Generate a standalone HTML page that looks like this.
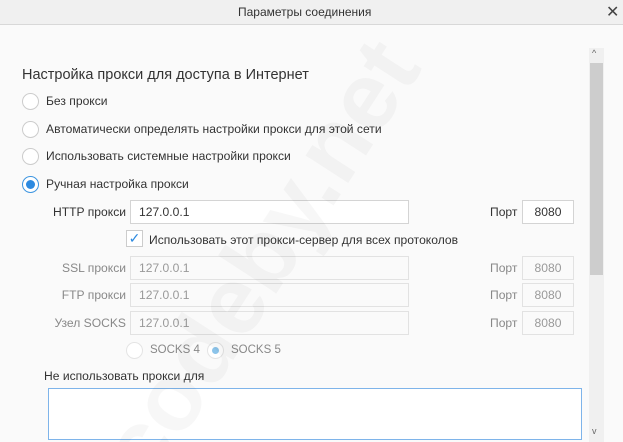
<!DOCTYPE html>
<html><head><meta charset="utf-8"><style>
*{box-sizing:border-box;margin:0;padding:0}
html,body{width:623px;height:442px;overflow:hidden}
body{background:#fafafa;font-family:"Liberation Sans",sans-serif;font-size:12.1px;color:#333}
#w{position:relative;width:623px;height:442px;overflow:hidden}
.a{position:absolute;white-space:nowrap}
.tb{position:absolute;left:0;top:0;width:623px;height:25px;background:#f0f0f0;border-bottom:1px solid #d8d8d8}
.r{position:absolute;width:17px;height:17px;border:1px solid #ccc;border-radius:50%;background:#fff}
.in{position:absolute;height:24px;border:1px solid #d4d4d4;background:#fff;padding:4px 8px;font-size:12.1px}
.dis{color:#999;background:#fafafa;border-color:#e2e2e2}
.lab{position:absolute;text-align:right;width:126px;left:0}
.g{color:#888}
</style></head><body><div id="w">
<div class="tb"></div>
<div class="a" style="left:238px;top:5px;font-size:12px;color:#333">Параметры соединения</div>
<div class="a" style="left:606px;top:2px;font-size:16px;color:#444">✕</div>
<div class="a" style="left:589px;top:48px;width:15px;height:394px;background:#f0f0f0"></div>
<div class="a" style="left:590px;top:63px;width:13px;height:212px;background:#cdcdcd"></div>
<div class="a" style="left:592px;top:48px;font-size:9px;color:#666">^</div>
<div class="a" style="left:592px;top:426px;font-size:9px;color:#666">v</div>
<div class="a" style="left:22px;top:67px;font-size:14.5px;color:#333">Настройка прокси для доступа в Интернет</div>
<div class="r" style="left:22px;top:93px"></div><div class="a" style="left:46px;top:94px">Без прокси</div>
<div class="r" style="left:22px;top:121px"></div><div class="a" style="left:46px;top:122px">Автоматически определять настройки прокси для этой сети</div>
<div class="r" style="left:22px;top:148px"></div><div class="a" style="left:46px;top:149px">Использовать системные настройки прокси</div>
<div class="r" style="left:22px;top:176px;border-color:#3d95e0"><div style="position:absolute;left:3px;top:3px;width:9px;height:9px;border-radius:50%;background:#2d8ae0"></div></div><div class="a" style="left:46px;top:177px">Ручная настройка прокси</div>
<div class="lab" style="top:205px">HTTP прокси</div>
<div class="in" style="left:130px;top:200px;width:279px">127.0.0.1</div>
<div class="a" style="left:490px;top:205px">Порт</div>
<div class="in" style="left:522px;top:200px;width:52px;text-align:center">8080</div>
<div class="a" style="left:126px;top:230px;width:17px;height:17px;border:1px solid #ccc;background:#fff;color:#2d8ae0;font-size:14px;text-align:center;line-height:15px">✓</div>
<div class="a" style="left:149px;top:233px">Использовать этот прокси-сервер для всех протоколов</div>
<div class="lab g" style="top:261px">SSL прокси</div>
<div class="in dis" style="left:130px;top:256px;width:279px">127.0.0.1</div>
<div class="a g" style="left:490px;top:261px">Порт</div>
<div class="in dis" style="left:522px;top:256px;width:52px;text-align:center">8080</div>
<div class="lab g" style="top:288px">FTP прокси</div>
<div class="in dis" style="left:130px;top:283px;width:279px">127.0.0.1</div>
<div class="a g" style="left:490px;top:288px">Порт</div>
<div class="in dis" style="left:522px;top:283px;width:52px;text-align:center">8080</div>
<div class="lab g" style="top:316px">Узел SOCKS</div>
<div class="in dis" style="left:130px;top:311px;width:279px">127.0.0.1</div>
<div class="a g" style="left:490px;top:316px">Порт</div>
<div class="in dis" style="left:522px;top:311px;width:52px;text-align:center">8080</div>
<div class="r" style="left:126px;top:342px;border-color:#e4e4e4"></div><div class="a g" style="left:150px;top:344px;font-size:11.5px">SOCKS 4</div>
<div class="r" style="left:207px;top:342px;border-color:#e4e4e4"><div style="position:absolute;left:4px;top:4px;width:7px;height:7px;border-radius:50%;background:#8cc4ea"></div></div><div class="a g" style="left:231px;top:344px;font-size:11.5px">SOCKS 5</div>
<div class="a" style="left:44px;top:369px">Не использовать прокси для</div>
<div class="a" style="left:48px;top:388px;width:534px;height:52px;border:1px solid #7eb4ea;background:#fff"></div>
<div class="a" style="left:10px;top:205px;width:500px;height:110px;line-height:110px;text-align:center;font-size:96px;font-weight:bold;color:rgba(0,0,0,0.03);transform:rotate(-57deg);pointer-events:none">codeby.net</div>
</div></body></html>
